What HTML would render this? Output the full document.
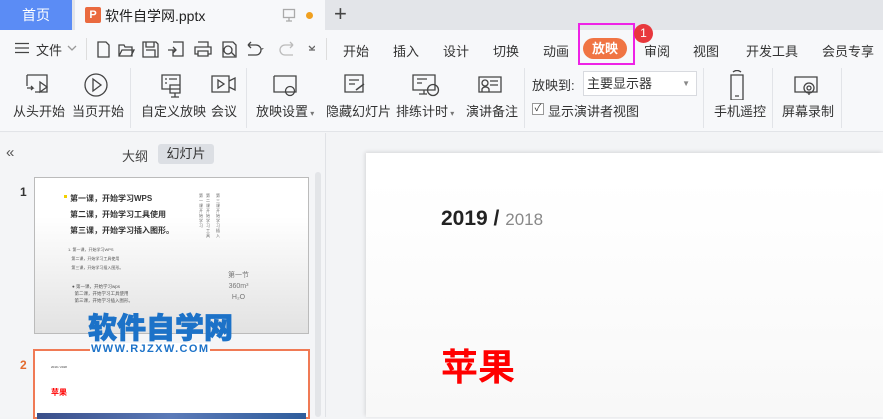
<!DOCTYPE html>
<html><head><meta charset="utf-8"><style>
*{margin:0;padding:0;box-sizing:border-box}
body{width:883px;height:417px;overflow:hidden;position:relative;background:#f3f4f6;font-family:"Liberation Sans","Noto Sans CJK SC",sans-serif;font-size:13px;color:#333}
.a{position:absolute;white-space:nowrap}
svg{position:absolute;fill:none;stroke:#444;stroke-width:1.3}
</style></head><body>
<!-- tab bar -->
<div class="a" style="left:0;top:0;width:883px;height:30px;background:#e3e5e9"></div>
<div class="a" style="left:0;top:0;width:72px;height:30px;background:#5b8cf5;color:#fff;font-size:14px;line-height:30px;text-align:center">首页</div>
<div class="a" style="left:75px;top:0;width:250px;height:30px;background:#f7f8fa"></div>
<div class="a" style="left:85px;top:7px;width:16px;height:16px;background:#ea6a3f;border-radius:2px;color:#fff;font-size:11px;line-height:16px;text-align:center;font-weight:bold">P</div>
<div class="a" style="left:105px;top:6px;font-size:14px;color:#222">软件自学网.pptx</div>
<svg style="left:282px;top:8px" width="14" height="14" viewBox="0 0 14 14"><rect x="1.5" y="1.5" width="11" height="8" stroke="#aaa"/><path d="M7 10v3M4 13h6" stroke="#aaa"/></svg>
<div class="a" style="left:306px;top:12px;width:7px;height:7px;border-radius:50%;background:#f0a020"></div>
<div class="a" style="left:334px;top:1px;font-size:22px;color:#444">+</div>
<!-- menu row -->
<div class="a" style="left:0;top:30px;width:883px;height:102px;background:#f7f8fa;border-bottom:1px solid #e2e4e8"></div>
<svg style="left:15px;top:42px" width="14" height="12" viewBox="0 0 14 12"><path d="M0 1.5h14M0 6h14M0 10.5h14"/></svg>
<div class="a" style="left:36px;top:40px;font-size:13px">文件</div>
<svg style="left:67px;top:45px" width="10" height="6"><path d="M1 1l4 4 4-4" stroke="#999"/></svg>
<div class="a" style="left:86px;top:38px;width:1px;height:22px;background:#ddd"></div>
<svg style="left:95px;top:40px" width="220" height="18" viewBox="0 0 220 18">
<path d="M3 2h8l3 3v12H3z"/>
<path d="M24 5h5l1 2h7v9H24zM24 16l3-6h12l-3 6"/>
<path d="M48 2h13l2 2v13H48zM51 2v5h8V2M51 10h9v7"/>
<path d="M78 2h10v14H78V10M73 10h8M78 7l3 3-3 3"/>
<path d="M103 2h10v5M100 7h16v7h-3v-3h-10v3h-3zM103 11h10v5h-10z"/>
<path d="M128 2h10l3 3v12h-13zM133 6a4 4 0 1 1 0 8 4 4 0 1 1 0-8M136 12l4 4"/>
<path d="M153 5h8a5 5 0 0 1 0 10h-8M153 5l3-3M153 5l3 3"/>
<path d="M165 8l2 2 2-2" fill="#777" stroke="none"/>
<path d="M198 5h-8a5 5 0 0 0 0 10h8M198 5l-3-3M198 5l-3 3" stroke="#bbb"/>
<path d="M214 6l3 3 3-3M214 10h6" stroke="#666"/>
</svg>
<div class="a" style="left:326px;top:38px;width:1px;height:22px;background:#ddd"></div>
<div class="a" style="left:343px;top:41px">开始</div>
<div class="a" style="left:393px;top:41px">插入</div>
<div class="a" style="left:443px;top:41px">设计</div>
<div class="a" style="left:493px;top:41px">切换</div>
<div class="a" style="left:543px;top:41px">动画</div>
<div class="a" style="left:583px;top:38px;width:44px;height:21px;border-radius:11px;background:#f07443;color:#fff;line-height:21px;text-align:center;font-weight:bold">放映</div>
<div class="a" style="left:578px;top:23px;width:57px;height:42px;border:2px solid #ee22e6"></div>
<div class="a" style="left:634px;top:24px;width:19px;height:19px;border-radius:50%;background:#e8383d;color:#fff;font-size:12px;line-height:19px;text-align:center">1</div>
<div class="a" style="left:644px;top:41px">审阅</div>
<div class="a" style="left:693px;top:41px">视图</div>
<div class="a" style="left:746px;top:41px">开发工具</div>
<div class="a" style="left:822px;top:41px">会员专享</div>
<!-- ribbon -->
<svg style="left:0;top:70px" width="883" height="30" viewBox="0 0 883 30">
<path d="M27 5h20v17H35M27 5v11M27 18h6l-2-2M33 18l-2 2M40 12l7 5-7 5z"/>
<circle cx="96" cy="15" r="11"/><path d="M93 9l8 6-8 6z"/>
<path d="M162 5h18v14h-18zM165 9h2M169 9h8M165 13h2M170 15h10v8h-10zM175 23v4M171 27h8"/>
<path d="M212 6h17v16h-17zM229 11l6-3v12l-6-3M218 10l6 4-6 4z"/>
<path d="M274 6h22v16h-22M274 6v16h12"/><circle cx="290" cy="21" r="4.5"/>
<path d="M345 5h18v17h-18zM349 10h10M349 14h6"/><path d="M356 20l8-6" stroke-width="1.5"/>
<path d="M413 5h22v15h-22zM417 9h10M417 13h5M424 20v4M419 24h8"/><circle cx="433" cy="20" r="5.5"/>
<path d="M479 7h22v15h-22zM490 11h8M490 15h8M482 22v-3a4 4 0 0 1 7 0v3"/><circle cx="485" cy="13" r="3"/>
<path d="M731 5h12v25h-12zM735 26h4M733 2a6 6 0 0 1 8 0"/>
<path d="M795 7h22v15h-22zM803 22h6v3"/><circle cx="809" cy="18" r="5"/><circle cx="809" cy="18" r="2"/>
</svg>
<div class="a" style="left:13px;top:101px">从头开始</div>
<div class="a" style="left:72px;top:101px">当页开始</div>
<div class="a" style="left:130px;top:68px;width:1px;height:60px;background:#e2e4e8"></div>
<div class="a" style="left:141px;top:101px">自定义放映</div>
<div class="a" style="left:211px;top:101px">会议</div>
<div class="a" style="left:246px;top:68px;width:1px;height:60px;background:#e2e4e8"></div>
<div class="a" style="left:256px;top:101px">放映设置<span style="font-size:8px;color:#777"> ▾</span></div>
<div class="a" style="left:326px;top:101px">隐藏幻灯片</div>
<div class="a" style="left:396px;top:101px">排练计时<span style="font-size:8px;color:#777"> ▾</span></div>
<div class="a" style="left:466px;top:101px">演讲备注</div>
<div class="a" style="left:524px;top:68px;width:1px;height:60px;background:#e2e4e8"></div>
<div class="a" style="left:532px;top:75px">放映到:</div>
<div class="a" style="left:583px;top:71px;width:114px;height:25px;border:1px solid #d8dadf;background:#fff;padding-left:3px;line-height:23px">主要显示器<span style="position:absolute;right:6px;font-size:8px;color:#888">▼</span></div>
<div class="a" style="left:532px;top:103px;width:12px;height:12px;border:1px solid #999;background:#fff;font-size:10px;line-height:10px;text-align:center">✓</div>
<div class="a" style="left:548px;top:101px">显示演讲者视图</div>
<div class="a" style="left:703px;top:68px;width:1px;height:60px;background:#e2e4e8"></div>
<div class="a" style="left:714px;top:101px">手机遥控</div>
<div class="a" style="left:772px;top:68px;width:1px;height:60px;background:#e2e4e8"></div>
<div class="a" style="left:782px;top:101px">屏幕录制</div>
<div class="a" style="left:841px;top:68px;width:1px;height:60px;background:#e2e4e8"></div>
<!-- left panel -->
<div class="a" style="left:0;top:133px;width:326px;height:284px;background:#f4f5f7;border-right:1px solid #e0e2e6"></div>
<div class="a" style="left:6px;top:144px;font-size:15px;color:#555">«</div>
<div class="a" style="left:122px;top:146px;color:#444">大纲</div>
<div class="a" style="left:158px;top:144px;width:56px;height:20px;background:#dcdfe4;border-radius:3px;line-height:20px;text-align:center;color:#333">幻灯片</div>
<div class="a" style="left:315px;top:172px;width:6px;height:245px;background:#e3e5e8;border-radius:3px"></div>
<div class="a" style="left:20px;top:185px;font-size:12px;font-weight:bold;color:#333">1</div>
<div class="a" style="left:34px;top:177px;width:275px;height:157px;border:1px solid #bbb;background:linear-gradient(#fff 25%,#e2e2e2)"></div>
<div class="a" style="left:70px;top:191px;font-size:8px;font-weight:bold;color:#333;line-height:16px">第一课，开始学习WPS<br>第二课，开始学习工具使用<br>第三课，开始学习插入图形。</div>
<div class="a" style="left:64px;top:195px;width:3px;height:3px;background:#f2d000"></div>
<div class="a" style="left:68px;top:245px;font-size:4px;color:#555;line-height:9px">1. 第一课，开始学习WPS<br>&nbsp;&nbsp;&nbsp;第二课，开始学习工具使用<br>&nbsp;&nbsp;&nbsp;第三课，开始学习插入图形。</div>
<div class="a" style="left:72px;top:283px;font-size:4.5px;color:#555;line-height:7px">● 第一课，开始学习wps<br>&nbsp;&nbsp;第二课，开始学习工具使用<br>&nbsp;&nbsp;第三课，开始学习插入图形。</div>
<div class="a" style="left:199px;top:193px;width:4px;font-size:4px;line-height:5px;color:#666;white-space:normal">第一课开始学习</div>
<div class="a" style="left:206px;top:193px;width:4px;font-size:4px;line-height:5px;color:#666;white-space:normal">第二课开始学习工具</div>
<div class="a" style="left:216px;top:193px;width:4px;font-size:4px;line-height:5px;color:#666;white-space:normal">第三课开始学习插入</div>
<div class="a" style="left:228px;top:270px;font-size:7px;color:#777;line-height:11px;text-align:center">第一节<br>360m³<br>H₂O</div>
<div class="a" style="left:88px;top:306px;font-size:29px;font-weight:900;color:#1c72c8;font-family:'Noto Sans CJK SC',sans-serif;line-height:40px;-webkit-text-stroke:0.8px #1c72c8">软件自学网</div>
<div class="a" style="left:90px;top:343px;font-size:11px;font-weight:bold;color:#1c72c8;letter-spacing:1.4px;background:#fff;line-height:12px;padding:0 1px">WWW.RJZXW.COM</div>
<div class="a" style="left:20px;top:358px;font-size:12px;font-weight:bold;color:#e36a2e">2</div>
<div class="a" style="left:33px;top:349px;width:277px;height:70px;border:2px solid #f07a55;background:#fff"></div>
<div class="a" style="left:90px;top:343px;font-size:11px;font-weight:bold;color:#1c72c8;letter-spacing:1.4px;background:#fff;line-height:12px;padding:0 1px">WWW.RJZXW.COM</div>
<div class="a" style="left:51px;top:365px;font-size:3px;color:#333">2019 / 2018</div>
<div class="a" style="left:51px;top:387px;font-size:8px;color:#f00;font-weight:bold">苹果</div>
<div class="a" style="left:37px;top:413px;width:269px;height:6px;background:linear-gradient(90deg,#3a4f8a,#5b7ab8,#2f5d9c)"></div>
<!-- main slide -->
<div class="a" style="left:366px;top:153px;width:517px;height:264px;background:linear-gradient(#fff 10%,#f8f8f8);box-shadow:-1px -1px 4px rgba(0,0,0,.12)"></div>
<div class="a" style="left:441px;top:207px;font-size:21px;font-weight:bold;color:#222">2019 / <span style="font-weight:normal;font-size:17px;color:#888">2018</span></div>
<div class="a" style="left:441px;top:340px;font-size:37px;font-weight:bold;color:#f00;font-family:'Noto Sans CJK SC',sans-serif;line-height:48px">苹果</div>
</body></html>
